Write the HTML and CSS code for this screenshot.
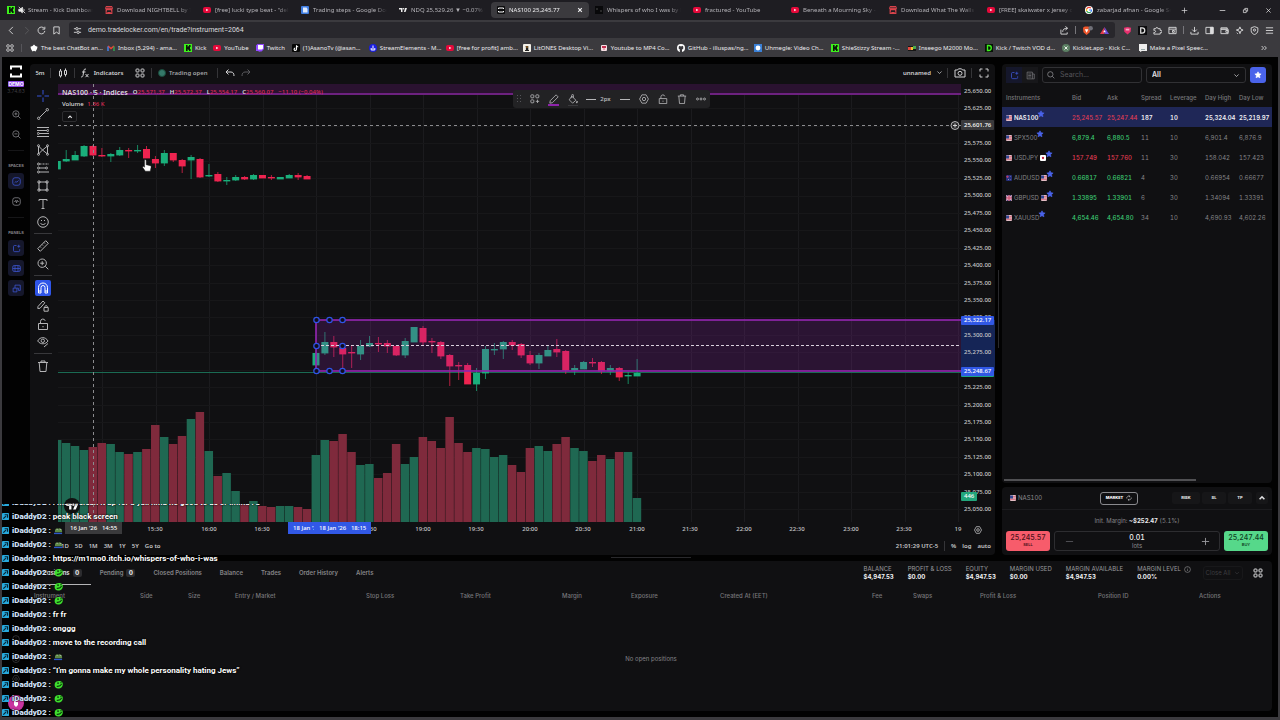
FILE: index.html
```html
<!DOCTYPE html>
<html lang="en">
<head>
    <meta charset="UTF-8">
    <meta name="viewport" content="width=device-width, initial-scale=1.0">
    <title>NAS100 25,245.77</title>
    <link rel="stylesheet" href="styles.css">
</head>
<body>
    <svg class="sprite" aria-hidden="true">
        <symbol id="i-kick" viewBox="0 0 8 8"><path fill="#3df01c" d="M0 0h8v8H0z"/><path fill="#0b1a08" d="M2 1h1.6v1.8h.7V2H5V1h1.6v2H6v1.9h.6V7H5V6h-.7v-.8h-.7V7H2z"/></symbol>
        <symbol id="i-yt" viewBox="0 0 8 8"><rect y="1" width="8" height="6" rx="2" fill="#e5093a"/><path fill="#fff" d="M3.2 2.7v2.6L5.4 4z"/></symbol>
        <symbol id="i-itch" viewBox="0 0 8 8"><path fill="#d8434b" d="M1 0h6l1 2.2-.6 1V8H.6V3.2L0 2.200z"/><path fill="#1d1c21" d="M2 4.200h4l.5 2.600L5 6H3l-1.500.8z"/><path fill="#1d1c21" d="M1 1.500h6v.6H1z"/></symbol>
        <symbol id="i-doc" viewBox="0 0 8 8"><rect width="8" height="8" rx="1" fill="#3f7de0"/><path fill="#dfeafc" d="M2 1.500h3.500L6.500 3v3.500H2z"/></symbol>
        <symbol id="i-tv" viewBox="0 0 8 8"><path fill="#eee" d="M0 2h3.500v4H2V3.500H0zM6 2h2L6.500 6H5z"/><circle cx="4.500" cy="2.800" r=".8" fill="#eee"/></symbol>
        <symbol id="i-tl" viewBox="0 0 8 8"><rect width="8" height="8" rx="1" fill="#0b0b0c"/><path fill="none" stroke="#fff" d="M1.500 3V2h5v1M1.500 5v1h5V5"/></symbol>
        <symbol id="i-dark" viewBox="0 0 8 8"><rect width="8" height="8" fill="#08080a"/><path stroke="#666" stroke-width=".7" d="M1 3h2M5 5h2"/></symbol>
        <symbol id="i-google" viewBox="0 0 8 8"><circle cx="4" cy="4" r="4" fill="#fff"/><g fill="none" stroke-width="1.200"><path stroke="#ea4335" d="M1.700 3a2.500 2.500 0 0 1 4.200-.8"/><path stroke="#fbbc05" d="M1.700 5a2.500 2.500 0 0 1 0-2"/><path stroke="#34a853" d="M5.800 5.800A2.500 2.500 0 0 1 1.700 5"/><path stroke="#4285f4" d="M4 4h2.500a2.500 2.500 0 0 1-.7 1.800"/></g></symbol>
        <symbol id="i-bot" viewBox="0 0 8 8"><path fill="#fff" d="M4 .5 5.500 2l2 .7L7 5 5.500 7.500 4 6.700 2.500 7.500 1 5 .5 2.700 2.500 2z"/></symbol>
        <symbol id="i-gmail" viewBox="0 0 8 8"><path fill="none" stroke="#ea4335" stroke-width="1.500" d="M1 2l3 2.500L7 2"/><path stroke="#4285f4" stroke-width="1.400" d="M1 2.500V7"/><path stroke="#34a853" stroke-width="1.400" d="M7 2.500V7"/></symbol>
        <symbol id="i-twitch" viewBox="0 0 8 8"><path fill="#9147ff" d="M1.500 0H8v5L5.500 7.500H4L2.700 8V7H0V1.500z"/><path fill="#fff" d="M2 1h5v3.500L6 5.500H2z"/></symbol>
        <symbol id="i-tiktok" viewBox="0 0 8 8"><rect width="8" height="8" rx="1" fill="#060606"/><path fill="none" stroke="#fff" stroke-width="1.100" d="M4.500 1.200v4a1.200 1.200 0 1 1-1.200-1.200M4.500 1.500c.2.900.8 1.400 1.700 1.400"/></symbol>
        <symbol id="i-se" viewBox="0 0 8 8"><circle cx="4" cy="4" r="4" fill="#1a1fe0"/><path fill="none" stroke="#fff" d="M4 1.500v4M2.200 4v2h3.600V4"/></symbol>
        <symbol id="i-lit" viewBox="0 0 8 8"><rect width="8" height="8" rx="1" fill="#f3efe6"/><path fill="#222" d="M2.500 2h2.800v4H6v1H2V6h.9V3.500z"/><circle cx="4" cy="3" r=".8" fill="#e08a1e"/></symbol>
        <symbol id="i-mp4" viewBox="0 0 8 8"><rect x="1" y="1" width="6" height="6" rx="1" fill="#f6dfe4"/><path fill="#c22f50" d="M2 2h4v2H2zM3.200 4.500h1.600L4 6.200z"/></symbol>
        <symbol id="i-gh" viewBox="0 0 8 8"><circle cx="4" cy="4" r="4" fill="#fff"/><path fill="#3a393d" d="M2 1.700l1 .5h2l1-.5.2 1.300c.5 1.500-.2 2.400-1.200 2.600V8H3V6.600l-1-.3 1-.2v-.5C2 5.400 1.300 4.500 1.800 3z"/></symbol>
        <symbol id="i-uhm" viewBox="0 0 8 8"><rect width="8" height="8" fill="#3a80d6"/><circle cx="4" cy="4" r="2.400" fill="#fff"/></symbol>
        <symbol id="i-ins" viewBox="0 0 8 8"><rect y="2" width="8" height="5" fill="#151515"/><path fill="#e2463c" d="M0 3h3v3H0z"/><path fill="#f1c232" d="M3 3h2v3H3z"/><path fill="#48a84c" d="M5 2h3v3H5z"/></symbol>
        <symbol id="i-vod" viewBox="0 0 8 8"><rect width="8" height="8" fill="#061206"/><path fill="none" stroke="#3df01c" stroke-width="1.400" d="M2.500 1.500h1.300a2.500 2.500 0 0 1 0 5H2.500z"/></symbol>
        <symbol id="i-klet" viewBox="0 0 8 8"><circle cx="4" cy="4" r="4" fill="#5b7f63"/><path stroke="#e9efe9" d="M2.500 2.500l3 3M5.500 2.500l-3 3"/></symbol>
        <symbol id="i-pix" viewBox="0 0 8 8"><path fill="#eee" d="M0 0h8v7H3L1 8V7H0z"/><path fill="#9aa" d="M2 5h4v1H2z"/></symbol>

        <symbol id="i-x" viewBox="0 0 10 10"><path d="M2 2l6 6M8 2l-6 6"/></symbol>
        <symbol id="i-plus" viewBox="0 0 10 10"><path d="M5 1v8M1 5h8"/></symbol>
        <symbol id="i-minus" viewBox="0 0 10 10"><path d="M1 5h8"/></symbol>
        <symbol id="i-down" viewBox="0 0 10 10"><path d="M2 3.500l3 3 3-3"/></symbol>
        <symbol id="i-up" viewBox="0 0 10 10"><path d="M2 6.500l3-3 3 3"/></symbol>
        <symbol id="i-restore" viewBox="0 0 10 10"><path d="M2 4h4v4H2zM4 4V2h4v4H6"/></symbol>
        <symbol id="i-back" viewBox="0 0 10 10"><path d="M6.500 1l-4 4 4 4"/></symbol>
        <symbol id="i-fwd" viewBox="0 0 10 10"><path d="M3.500 1l4 4-4 4"/></symbol>
        <symbol id="i-reload" viewBox="0 0 10 10"><path d="M8.700 5.500A3.800 3.800 0 1 1 8 2.700M8.700.8v2.700H6"/></symbol>
        <symbol id="i-bm" viewBox="0 0 10 10"><path d="M2 1h6v8L5 6.800 2 9z"/></symbol>
        <symbol id="i-tune" viewBox="0 0 10 10"><path d="M1 3h2M6 3h3M1 7h3M7 7h2"/><circle cx="4.300" cy="3" r="1.300"/><circle cx="5.700" cy="7" r="1.300"/></symbol>
        <symbol id="i-share" viewBox="0 0 10 10"><path d="M1 4v5h7V7M3 6.500c0-2.500 1.500-4 5-4M6 .5l2.500 2L6 4.500"/></symbol>
        <symbol id="i-puzzle" viewBox="0 0 10 10"><path d="M1 3h2a1.300 1.300 0 1 1 2.600 0H8v2a1.300 1.300 0 1 1 0 2.400V9H1V7a1.200 1.200 0 1 0 0-2z"/></symbol>
        <symbol id="i-win" viewBox="0 0 10 10"><path d="M1 1.500h8v7H1zM1 3.500h8M5 5h2v2H5z"/></symbol>
        <symbol id="i-dl" viewBox="0 0 10 10"><path d="M5 1v5.500M2.500 4L5 6.500 7.500 4M1 6.500V9h8V6.500"/></symbol>
        <symbol id="i-side" viewBox="0 0 10 10"><path d="M1 1.500h8v7H1z"/><path fill="currentColor" d="M6 1.500h3v7H6z"/></symbol>
        <symbol id="i-wallet" viewBox="0 0 10 10"><path d="M1 2h7v1.500H1zM1 3.500h8v5H1zM9 5H6.500v2H9z"/></symbol>
        <symbol id="i-leo" viewBox="0 0 10 10"><path d="M5.500 1l1 2.500L9 4.500 6.500 5.600l-1 2.900-1-2.900L1.500 4.500l3-1zM2 7.500l1.200 1.200"/></symbol>
        <symbol id="i-shield" viewBox="0 0 10 10"><path d="M5 .7L8.700 2v3.200C8.700 7.400 7 8.800 5 9.500 3 8.800 1.300 7.400 1.300 5.200V2z"/><circle cx="5" cy="4.500" r="1.200"/></symbol>
        <symbol id="i-menu" viewBox="0 0 10 10"><path d="M1 2h8M1 5h8M1 8h8"/></symbol>
        <symbol id="i-grid" viewBox="0 0 10 10"><rect x="1" y="1" width="3" height="3" rx=".8"/><rect x="6" y="1" width="3" height="3" rx=".8"/><rect x="1" y="6" width="3" height="3" rx=".8"/><rect x="6" y="6" width="3" height="3" rx=".8"/></symbol>
        <symbol id="i-more" viewBox="0 0 10 10"><path d="M2 2.500L4.500 5 2 7.500M5.500 2.500L8 5 5.500 7.500"/></symbol>
        <symbol id="i-mute" viewBox="0 0 10 10"><path fill="currentColor" d="M1 4h2l2.500-2.500v7L3 6.500H1z"/><path d="M1 1l8 8M7 3.500a2 2 0 0 1 0 3"/></symbol>

        <symbol id="i-candles" viewBox="0 0 10 10"><path d="M1.500 3h2v5h-2zM6.500 2.500h2v4h-2zM2.500 1v2M2.500 8v1.500M7.500.5v2M7.500 6.500v2"/></symbol>
        <symbol id="i-fx" viewBox="0 0 10 10"><path d="M6 1.200C4.500.6 4 1.500 3.800 3L3 7.500C2.800 8.800 2 9.200 1 8.800M2 4h3.500M5.500 6l3 3.200M8.500 6l-3 3.200"/></symbol>
        <symbol id="i-undo" viewBox="0 0 10 10"><path d="M3.500 1.500L1 4l2.500 2.500M1 4h5c2 0 3 1.500 3 4"/></symbol>
        <symbol id="i-redo" viewBox="0 0 10 10"><path d="M6.500 1.500L9 4 6.500 6.500M9 4H4C2 4 1 5.500 1 8"/></symbol>
        <symbol id="i-camera" viewBox="0 0 12 10"><path d="M1 2h2.500L4.500.8h3L8.500 2H11v7H1z"/><circle cx="6" cy="5.300" r="2"/></symbol>
        <symbol id="i-full" viewBox="0 0 10 10"><path d="M1 3.500V1h2.500M6.500 1H9v2.500M9 6.500V9H6.500M3.500 9H1V6.500"/></symbol>
        <symbol id="i-cross" viewBox="0 0 12 12"><path d="M6 0v4.500M6 7.500V12M0 6h4.500M7.500 6H12"/></symbol>
        <symbol id="i-line" viewBox="0 0 12 12"><path d="M2.500 9.500l7-7"/><circle cx="1.700" cy="10.300" r="1.200"/><circle cx="10.300" cy="1.700" r="1.200"/></symbol>
        <symbol id="i-fib" viewBox="0 0 12 12"><path d="M0 1.500h12M0 4.500h10M2 7.500h10M0 10.500h12"/><circle cx="10.700" cy="4.500" r="1"/><circle cx="1.300" cy="7.500" r="1"/></symbol>
        <symbol id="i-xabcd" viewBox="0 0 12 12"><path d="M1.500 10V2l4 4 5-4v8l-5-4-4 4"/><circle cx="1.500" cy="1.700" r="1"/><circle cx="10.500" cy="1.700" r="1"/><circle cx="1.500" cy="10.300" r="1"/><circle cx="10.500" cy="10.300" r="1"/></symbol>
        <symbol id="i-pos" viewBox="0 0 12 12"><path stroke-dasharray="2 1" d="M2.500 2H12"/><path d="M2.500 6h6M2.500 10H12"/><circle cx="1.500" cy="2" r="1"/><circle cx="1.500" cy="6" r="1"/><circle cx="1.500" cy="10" r="1"/><circle cx="9.500" cy="6" r="1"/></symbol>
        <symbol id="i-rect" viewBox="0 0 12 12"><path d="M2 2h8v8H2z"/><circle cx="2" cy="2" r="1.200"/><circle cx="10" cy="2" r="1.200"/><circle cx="2" cy="10" r="1.200"/><circle cx="10" cy="10" r="1.200"/></symbol>
        <symbol id="i-text" viewBox="0 0 12 12"><path d="M2 3V1.500h8V3M6 1.500v9M4.500 10.500h3"/></symbol>
        <symbol id="i-smile" viewBox="0 0 12 12"><circle cx="6" cy="6" r="5.300"/><path d="M3.500 7c.8 2 4.200 2 5 0M4.500 4v1M7.500 4v1"/></symbol>
        <symbol id="i-ruler" viewBox="0 0 12 12"><path d="M.7 8.700l8-8 2.600 2.600-8 8zM3 6.500l1 1M5 4.500l1 1M7 2.500l1 1"/></symbol>
        <symbol id="i-zin" viewBox="0 0 12 12"><circle cx="5.200" cy="5.200" r="4.200"/><path d="M8.300 8.300l3 3M3.200 5.200h4M5.200 3.200v4"/></symbol>
        <symbol id="i-zout" viewBox="0 0 12 12"><circle cx="5.200" cy="5.200" r="4.200"/><path d="M8.300 8.300l3 3M3.200 5.200h4"/></symbol>
        <symbol id="i-magnet" viewBox="0 0 12 12"><path d="M1.500 11V5.500a4.500 4.500 0 0 1 9 0V11H8V5.500a2 2 0 0 0-4 0V11zM1.500 9H4M8 9h2.500"/></symbol>
        <symbol id="i-penlock" viewBox="0 0 12 12"><path d="M.8 8.500L1 6.500l5-5.500 1.800 1.800L3 8.300zM7 7.500h4.200v3.700H7zM8 7.500V6.300a1.200 1.200 0 0 1 2.200 0v1.200"/></symbol>
        <symbol id="i-lock" viewBox="0 0 12 12"><path d="M1.500 5.500h9v6h-9zM3.500 5.500V3.300a2.400 2.400 0 0 1 4.700-.5M6 8v1.300"/></symbol>
        <symbol id="i-eye" viewBox="0 0 12 12"><path d="M.7 5C3 .5 8.500.5 11 5 8.800 8.500 3.500 9 .7 5z"/><circle cx="5.800" cy="4.800" r="1.700"/><path d="M7 11l4-3.500"/></symbol>
        <symbol id="i-trash" viewBox="0 0 12 12"><path d="M1 2.500h10M4 2.500V1h4v1.500M2.200 2.500l.8 9h6l.8-9"/></symbol>
        <symbol id="i-tpl" viewBox="0 0 12 12"><rect x="1" y="1" width="3.600" height="3.600" rx="1"/><rect x="7" y="1" width="3.600" height="3.600" rx="1"/><rect x="1" y="7" width="3.600" height="3.600" rx="1"/><path d="M9 6.800v4M7 8.800h4"/></symbol>
        <symbol id="i-pencil" viewBox="0 0 12 12"><path d="M1 11l.5-3L8.500 1 11 3.500 4 10.500z"/></symbol>
        <symbol id="i-bucket" viewBox="0 0 12 12"><path d="M4.500 2.500l5 5-4 3.500-4-4zM4.500 5V1.500a1 1 0 0 1 2 0v3"/><path fill="currentColor" d="M11 8.500v2h-1z"/></symbol>
        <symbol id="i-gear" viewBox="0 0 12 12"><path d="M3.500 1h5L11.300 6 8.500 11h-5L.7 6z"/><circle cx="6" cy="6" r="2"/></symbol>
        <symbol id="i-dots" viewBox="0 0 12 12"><circle cx="1.800" cy="6" r="1.200"/><circle cx="6" cy="6" r="1.200"/><circle cx="10.200" cy="6" r="1.200"/></symbol>
        <symbol id="i-drag" viewBox="0 0 6 8"><path stroke-dasharray="1 2" d="M1.500 0v8M4.500 0v8"/></symbol>
        <symbol id="i-chartbox" viewBox="0 0 12 12"><rect x="1" y="1" width="10" height="10" rx="3"/><path d="M3.500 7.500L5.300 6l1.200 1L8.700 4.500"/></symbol>
        <symbol id="i-codebox" viewBox="0 0 12 12"><rect x="1" y="1" width="10" height="10" rx="3"/><path d="M3 6h1.200L5 4.300 6 8l1-3.700L7.800 6H9"/></symbol>
        <symbol id="i-newbox" viewBox="0 0 12 12"><path d="M6 2H3.500A1.500 1.500 0 0 0 2 3.500v5.200a1.500 1.500 0 0 0 1.500 1.500h5.200a1.500 1.500 0 0 0 1.500-1.500V7M9 1v4M7 3h4"/></symbol>
        <symbol id="i-depth" viewBox="0 0 12 12"><rect x="1" y="2" width="10" height="8" rx="2"/><path d="M1 6h10M4 2v8M8 2v8"/></symbol>
        <symbol id="i-blocks" viewBox="0 0 12 12"><path d="M4 1.500h7v7H8.500M1.500 5.500h5v5h-5zM4 1.500v4M6.500 5.500h2v3"/></symbol>
        <symbol id="i-news" viewBox="0 0 12 12"><path d="M1.500 1.500h7v9h-7zM8.500 4H11v6.500H8.500M3 4h4M3 6h4M3 8h4"/></symbol>
        <symbol id="i-search" viewBox="0 0 12 12"><circle cx="5" cy="5" r="4"/><path d="M8 8l3 3"/></symbol>
        <symbol id="i-swap" viewBox="0 0 12 12"><path d="M1.500 7a4.500 4 0 0 1 6-4.500M6 .8l1.800 1.800L6 4.300M10.500 5a4.500 4 0 0 1-6 4.500M6 7.700L4.200 9.500 6 11.200"/></symbol>
        <symbol id="i-info" viewBox="0 0 12 12"><circle cx="6" cy="6" r="5"/><path d="M6 5.500v3M6 3v1"/></symbol>
        <symbol id="i-star" viewBox="0 0 12 12"><path fill="currentColor" stroke="currentColor" stroke-linejoin="round" d="M6 1.200l1.400 3 3.300.4-2.400 2.300.6 3.300L6 8.600l-2.900 1.600.6-3.300L1.300 4.600l3.300-.4z"/></symbol>

        <symbol id="f-us" viewBox="0 0 12 12"><rect width="12" height="12" rx="2" fill="#e9dfe3"/><path stroke="#c8394f" stroke-width="1.600" d="M0 2.500h12M0 6h12M0 9.500h12"/><path fill="#33468f" d="M0 1h6v6H0z"/></symbol>
        <symbol id="f-jp" viewBox="0 0 12 12"><rect width="12" height="12" rx="2" fill="#fff"/><circle cx="6" cy="6" r="2.300" fill="#c01f3b"/></symbol>
        <symbol id="f-au" viewBox="0 0 12 12"><rect width="12" height="12" rx="2" fill="#27307c"/><path stroke="#d8436a" stroke-width="1.300" d="M0 3.500h6M3 1v5"/><path fill="#dde" d="M8 3h1v1H8zM9 8h1v1H9zM4 8h1.500v1.500H4z"/></symbol>
        <symbol id="f-gb" viewBox="0 0 12 12"><rect width="12" height="12" rx="2" fill="#39417f"/><path stroke="#e9a9bb" stroke-width="2.500" d="M0 1l12 10M12 1L0 11M6 0v12M0 6h12"/><path stroke="#c22347" stroke-width="1.300" d="M6 0v12M0 6h12"/></symbol>
        <symbol id="c-badge" viewBox="0 0 8 8"><rect width="8" height="8" rx="1" fill="#27a9dc"/><path fill="none" stroke="#072434" stroke-width="1.400" d="M1.500 6.500l3-3M3 2h3.300v3.300"/></symbol>
        <symbol id="c-frog" viewBox="0 0 10 10"><path fill="#3fe02e" d="M1 3.500C2 .5 8 0 9.500 3c.8 3-.5 6.500-5 6.500C1.500 9.500 0 7 1 3.500z"/><path fill="none" stroke="#0c3a0a" stroke-width="1.200" d="M3 7c2.500.3 4.500-.5 5.500-2.500M3.500 3.500h2M7 3h1.500"/></symbol>
        <symbol id="c-pepe" viewBox="0 0 10 8"><path fill="#5e8a45" d="M1 5c0-4 3-4 4-3 1-1 4-.6 4 2.500V6H1z"/><path fill="#2c57c9" d="M0 6.500h9V8H0z"/><path fill="#dfe8d8" d="M3 2.500h2v1H3zM6.500 2.500h2v1h-2z"/><path fill="#24361c" d="M4 2.500h1v1H4zM7.500 2.500h1v1h-1z"/></symbol>
    </svg>

    <header class="browser">
        <div class="tabs">
            <a class="tab" href="#"><svg class="fav"><use href="#i-kick"/></svg><svg class="icon fav mute"><use href="#i-mute"/></svg><span>Stream - Kick Dashboard</span></a>
            <a class="tab" href="#"><svg class="fav"><use href="#i-itch"/></svg><span>Download NIGHTBELL by Tom</span></a>
            <a class="tab" href="#"><svg class="fav"><use href="#i-yt"/></svg><span>[free] lucki type beat - "delirium"</span></a>
            <a class="tab" href="#"><svg class="fav"><use href="#i-doc"/></svg><span>Trading steps - Google Docs</span></a>
            <a class="tab" href="#"><svg class="fav"><use href="#i-tv"/></svg><span>NDQ 25,529.26 ▼ −0.07% Un</span></a>
            <a class="tab active" href="#"><svg class="fav"><use href="#i-tl"/></svg><span>NAS100 25,245.77</span><svg class="icon close"><use href="#i-x"/></svg></a>
            <a class="tab" href="#"><svg class="fav"><use href="#i-dark"/></svg><span>Whispers of who I was by M1m</span></a>
            <a class="tab" href="#"><svg class="fav"><use href="#i-yt"/></svg><span>fractured - YouTube</span></a>
            <a class="tab" href="#"><svg class="fav"><use href="#i-yt"/></svg><span>Beneath a Mourning Sky - Yo</span></a>
            <a class="tab" href="#"><svg class="fav"><use href="#i-itch"/></svg><span>Download What The Walls Hid</span></a>
            <a class="tab" href="#"><svg class="fav"><use href="#i-yt"/></svg><span>[FREE] skaiwater x jersey club</span></a>
            <a class="tab" href="#"><svg class="fav"><use href="#i-google"/></svg><span>zabarjad afnan - Google Search</span></a>
            <button class="bare new-tab" aria-label="New tab"><svg class="icon"><use href="#i-plus"/></svg></button>
            <div class="window-buttons">
                <button class="bare" aria-label="Minimize"><svg class="icon"><use href="#i-minus"/></svg></button>
                <button class="bare" aria-label="Restore"><svg class="icon"><use href="#i-restore"/></svg></button>
                <button class="bare" aria-label="Close"><svg class="icon"><use href="#i-x"/></svg></button>
            </div>
        </div>
        <div class="navbar">
            <button class="bare" aria-label="Back"><svg class="icon"><use href="#i-back"/></svg></button>
            <button class="bare dim" aria-label="Forward"><svg class="icon"><use href="#i-fwd"/></svg></button>
            <button class="bare" aria-label="Reload"><svg class="icon"><use href="#i-reload"/></svg></button>
            <button class="bare" aria-label="Bookmark"><svg class="icon"><use href="#i-bm"/></svg></button>
            <div class="address">
                <svg class="icon"><use href="#i-tune"/></svg>
                <input type="text" aria-label="Address" value="demo.tradelocker.com/en/trade?instrument=2064">
                <svg class="icon"><use href="#i-share"/></svg>
                <i class="sep"></i>
                <svg class="brand" viewBox="0 0 12 10"><path fill="#f0562b" d="M1 2l2-1.500h4L9 2l-.5 5L5 10 1.500 7z"/><path fill="#fff" d="M3 3.500h4L5 7.500z"/><circle cx="9.500" cy="2.500" r="2.500" fill="#707078"/></svg>
                <svg class="brand" viewBox="0 0 12 10"><path fill="#e33b4b" d="M6 1L1 9h5z"/><path fill="#6a4bd8" d="M6 1l5 8H6z"/><path fill="#fff" d="M6 4.500L4.500 7h3z"/></svg>
            </div>
            <div class="extensions">
                <svg viewBox="0 0 10 10"><path fill="#e5306e" d="M1 2l4-1 4 1-.5 4.500L5 9.500 1.500 6.500z"/><path fill="#f7a9c3" d="M3 3h4v2H3z"/></svg>
                <svg viewBox="0 0 10 10"><path fill="#0c0c0e" d="M0 0h10v10H0z"/><path fill="none" stroke="#ddd" stroke-width="1.400" d="M3 2h1.500a3 3 0 0 1 0 6H3z"/></svg>
                <svg class="icon"><use href="#i-puzzle"/></svg>
                <svg class="icon"><use href="#i-win"/></svg>
                <i class="sep"></i>
                <svg class="icon"><use href="#i-dl"/></svg>
                <svg class="icon"><use href="#i-side"/></svg>
                <svg class="icon"><use href="#i-wallet"/></svg>
                <svg class="icon"><use href="#i-leo"/></svg>
                <svg class="icon"><use href="#i-shield"/></svg>
                <svg class="icon"><use href="#i-menu"/></svg>
            </div>
        </div>
        <nav class="bookmarks">
            <svg class="icon apps"><use href="#i-grid"/></svg>
            <i class="sep"></i>
            <a class="long" href="#"><svg><use href="#i-bot"/></svg>The best ChatBot an...</a>
            <a class="long" href="#"><svg><use href="#i-gmail"/></svg>Inbox (5,294) - ama...</a>
            <a href="#"><svg><use href="#i-kick"/></svg>Kick</a>
            <a href="#"><svg><use href="#i-yt"/></svg>YouTube</a>
            <a href="#"><svg><use href="#i-twitch"/></svg>Twitch</a>
            <a class="long" href="#"><svg><use href="#i-tiktok"/></svg>(1)AsanoTv (@asan...</a>
            <a class="long" href="#"><svg><use href="#i-se"/></svg>StreamElements - M...</a>
            <a class="long" href="#"><svg><use href="#i-yt"/></svg>[free for profit] amb...</a>
            <a class="long" href="#"><svg><use href="#i-lit"/></svg>LitONES Desktop Vi...</a>
            <a class="long" href="#"><svg><use href="#i-mp4"/></svg>Youtube to MP4 Co...</a>
            <a class="long" href="#"><svg><use href="#i-gh"/></svg>GitHub - illuspas/ng...</a>
            <a class="long" href="#"><svg><use href="#i-uhm"/></svg>Uhmegle: Video Ch...</a>
            <a class="long" href="#"><svg><use href="#i-kick"/></svg>ShieStizzy Stream -...</a>
            <a class="long" href="#"><svg><use href="#i-ins"/></svg>Inseego M2000 Mo...</a>
            <a class="long" href="#"><svg><use href="#i-vod"/></svg>Kick / Twitch VOD d...</a>
            <a class="long" href="#"><svg><use href="#i-klet"/></svg>Kicklet.app - Kick C...</a>
            <a class="long" href="#"><svg><use href="#i-pix"/></svg>Make a Pixel Speec...</a>
            <button class="bare overflow" aria-label="More bookmarks"><svg class="icon"><use href="#i-more"/></svg></button>
        </nav>
    </header>

    <div class="app">
        <aside class="rail">
            <svg class="logo" viewBox="0 0 12 12"><path fill="none" stroke="#fff" stroke-width="2" d="M1 4V1h10v3M1 8v3h10V8"/></svg>
            <span class="demo">DEMO</span>
            <span class="version">3.74.63</span>
            <button class="rail-btn first" aria-label="Zoom in"><svg class="icon"><use href="#i-zin"/></svg></button>
            <button class="rail-btn" aria-label="Zoom out"><svg class="icon"><use href="#i-zout"/></svg></button>
            <hr>
            <span class="rail-label">SPACES</span>
            <button class="rail-btn on" aria-label="Chart space"><svg class="icon"><use href="#i-chartbox"/></svg></button>
            <button class="rail-btn" aria-label="Code space"><svg class="icon"><use href="#i-codebox"/></svg></button>
            <hr>
            <span class="rail-label">PANELS</span>
            <button class="rail-btn on" aria-label="Instruments"><svg class="icon"><use href="#i-newbox"/></svg></button>
            <button class="rail-btn on" aria-label="Depth"><svg class="icon"><use href="#i-depth"/></svg></button>
            <button class="rail-btn on" aria-label="Layout"><svg class="icon"><use href="#i-blocks"/></svg></button>
            <div class="rail-foot">
                <svg class="icon"><use href="#i-info"/></svg>
                <svg class="icon"><use href="#i-smile"/></svg>
                <svg class="icon"><use href="#i-gear"/></svg>
                <svg class="avatar" viewBox="0 0 16 16"><circle cx="8" cy="8" r="8" fill="#c8359f"/><path fill="#fff" d="M6 4h2v3h2v3L8 12 6 10z"/></svg>
            </div>
        </aside>

        <main class="workspace">
            <section class="panel chart">
                <div class="chart-top">
                    <button class="bare w-tf">5m</button><i class="sep"></i>
                    <button class="bare w-icon" aria-label="Candles"><svg class="icon"><use href="#i-candles"/></svg></button><i class="sep"></i>
                    <button class="bare w-ind"><svg class="icon"><use href="#i-fx"/></svg>Indicators</button>
                    <button class="bare w-icon" aria-label="Layouts"><svg class="icon"><use href="#i-grid"/></svg></button><i class="sep"></i>
                    <span class="market-state"><b></b>Trading open</span><i class="sep"></i>
                    <button class="bare w-icon" aria-label="Undo"><svg class="icon"><use href="#i-undo"/></svg></button>
                    <button class="bare dim" aria-label="Redo"><svg class="icon"><use href="#i-redo"/></svg></button>
                    <button class="bare layout-name">unnamed<svg class="icon"><use href="#i-down"/></svg></button><i class="sep"></i>
                    <button class="bare w-icon" aria-label="Snapshot"><svg class="icon camera"><use href="#i-camera"/></svg></button><i class="sep"></i>
                    <button class="bare w-icon" aria-label="Fullscreen"><svg class="icon"><use href="#i-full"/></svg></button>
                </div>
                <div class="chart-body">
                    <div class="draw-tools">
                        <button class="cross" aria-label="Cursor"><svg class="icon"><use href="#i-cross"/></svg></button>
                        <button aria-label="Trend line"><svg class="icon"><use href="#i-line"/></svg></button>
                        <button aria-label="Fib retracement"><svg class="icon"><use href="#i-fib"/></svg></button>
                        <button aria-label="Patterns"><svg class="icon"><use href="#i-xabcd"/></svg></button>
                        <button aria-label="Positions"><svg class="icon"><use href="#i-pos"/></svg></button>
                        <button aria-label="Shapes"><svg class="icon"><use href="#i-rect"/></svg></button>
                        <button aria-label="Text"><svg class="icon"><use href="#i-text"/></svg></button>
                        <button aria-label="Emoji"><svg class="icon"><use href="#i-smile"/></svg></button>
                        <hr>
                        <button aria-label="Measure"><svg class="icon"><use href="#i-ruler"/></svg></button>
                        <button aria-label="Zoom"><svg class="icon"><use href="#i-zin"/></svg></button>
                        <hr>
                        <button class="on" aria-label="Magnet"><svg class="icon"><use href="#i-magnet"/></svg></button>
                        <button aria-label="Keep drawing"><svg class="icon"><use href="#i-penlock"/></svg></button>
                        <button aria-label="Lock"><svg class="icon"><use href="#i-lock"/></svg></button>
                        <button aria-label="Hide"><svg class="icon"><use href="#i-eye"/></svg></button>
                        <hr>
                        <button aria-label="Remove"><svg class="icon"><use href="#i-trash"/></svg></button>
                    </div>
                    <div class="plot">
                        <svg class="canvas" id="canvas"></svg>
                        <div class="legend">
                            <div class="legend-title"><strong>NAS100 · 5 · Indices</strong>
                                <span>O<em>25,571.37</em></span><span>H<em>25,572.37</em></span><span>L<em>25,554.17</em></span><span>C<em>25,560.07</em></span><em>−11.10 (−0.04%)</em></div>
                            <div class="legend-vol">Volume <em>1.36 K</em></div>
                            <button class="collapse" aria-label="Collapse legend"><svg class="icon"><use href="#i-up"/></svg></button>
                        </div>
                        <div class="shape-bar">
                            <svg class="icon drag"><use href="#i-drag"/></svg>
                            <button aria-label="Template"><svg class="icon"><use href="#i-tpl"/></svg></button>
                            <button class="purple" aria-label="Line colour"><svg class="icon"><use href="#i-pencil"/></svg></button>
                            <button class="fill" aria-label="Fill colour"><svg class="icon"><use href="#i-bucket"/></svg></button>
                            <button class="wide"><i></i>2px</button>
                            <button aria-label="Line style"><i></i></button>
                            <button aria-label="Settings"><svg class="icon"><use href="#i-gear"/></svg></button>
                            <button aria-label="Lock"><svg class="icon"><use href="#i-lock"/></svg></button>
                            <button aria-label="Delete"><svg class="icon"><use href="#i-trash"/></svg></button>
                            <button aria-label="More"><svg class="icon"><use href="#i-dots"/></svg></button>
                        </div>
                        <svg class="tv-mark" viewBox="0 0 14 14"><circle cx="7" cy="7" r="7" fill="#111"/><path fill="#fff" d="M2 5h4.500v5h-2V7H2zM10 5h2.500l-2.200 5H8z"/><circle cx="8.200" cy="6" r="1.100" fill="#fff"/></svg>
                        <svg class="pointer" viewBox="0 0 12 16"><path fill="#fff" stroke="#222" stroke-width=".6" d="M3 1c1-.5 2 0 2 1v5l5 1.200c1 .3 1.200 1 1 2L10 15H4L.8 10.500c-.4-1 .8-1.700 1.500-1L3 10z"/></svg>
                    </div>
                    <div class="price-axis">
                        <div class="range-band"></div>
                        <div class="prices" id="prices"></div>
                        <span class="tag t-cursor">25,601.76</span>
                        <span class="tag t-last"></span>
                        <span class="tag t-top">25,322.17</span>
                        <span class="tag t-bottom">25,248.67</span>
                        <span class="tag t-vol">446</span>
                    </div>
                    <div class="time-axis" id="times">
                        <span class="time-tag grey">16 Jan '26 &nbsp; 14:55</span>
                        <span class="time-tag from">18 Jan '26</span>
                        <span class="time-tag to">18 Jan '26 &nbsp; 18:15</span>
                    </div>
                    <button class="bare axis-gear" aria-label="Axis settings"><svg class="icon"><use href="#i-gear"/></svg></button>
                </div>
                <div class="chart-foot">
                    <button class="bare">1D</button><button class="bare">5D</button><button class="bare">1M</button><button class="bare">3M</button><button class="bare">1Y</button><button class="bare">5Y</button><button class="bare">Go to</button>
                    <span class="clock">21:01:29 UTC-5</span><i class="sep"></i>
                    <button class="bare">%</button><button class="bare">log</button><button class="bare">auto</button>
                </div>
            </section>

            <div class="side">
                <section class="panel instruments">
                    <div class="filters">
                        <button class="sq on" aria-label="Instruments"><svg class="icon"><use href="#i-newbox"/></svg></button>
                        <button class="sq" aria-label="News"><svg class="icon"><use href="#i-news"/></svg></button>
                        <label class="search"><svg class="icon"><use href="#i-search"/></svg><input type="text" placeholder="Search..." aria-label="Search instruments"></label>
                        <div class="select"><select aria-label="Category"><option>All</option></select><svg class="icon"><use href="#i-down"/></svg></div>
                        <button class="star-btn" aria-label="Favourites"><svg class="icon"><use href="#i-star"/></svg></button>
                    </div>
                    <table class="quotes">
                        <colgroup><col class="q-name"><col class="q-bid"><col class="q-ask"><col class="q-spread"><col class="q-lev"><col class="q-high"><col class="q-low"></colgroup>
                        <thead>
                            <tr><th>Instruments</th><th>Bid</th><th>Ask</th><th>Spread</th><th>Leverage</th><th>Day High</th><th>Day Low</th></tr>
                        </thead>
                        <tbody>
                            <tr class="selected"><td><svg class="flag"><use href="#f-us"/></svg>NAS100<svg class="fave"><use href="#i-star"/></svg></td><td class="down">25,245.57</td><td class="down">25,247.44</td><td>187</td><td>10</td><td>25,324.04</td><td>25,219.97</td></tr>
                            <tr><td><svg class="flag"><use href="#f-us"/></svg>SPX500<svg class="fave"><use href="#i-star"/></svg></td><td class="up">6,879.4</td><td class="up">6,880.5</td><td>11</td><td>10</td><td>6,901.4</td><td>6,876.9</td></tr>
                            <tr><td><svg class="flag"><use href="#f-us"/></svg>USDJPY<svg class="flag second"><use href="#f-jp"/></svg><svg class="fave"><use href="#i-star"/></svg></td><td class="down">157.749</td><td class="down">157.760</td><td>11</td><td>30</td><td>158.042</td><td>157.423</td></tr>
                            <tr><td><svg class="flag"><use href="#f-au"/></svg>AUDUSD<svg class="flag second"><use href="#f-us"/></svg><svg class="fave"><use href="#i-star"/></svg></td><td class="up">0.66817</td><td class="up">0.66821</td><td>4</td><td>30</td><td>0.66954</td><td>0.66677</td></tr>
                            <tr><td><svg class="flag"><use href="#f-gb"/></svg>GBPUSD<svg class="flag second"><use href="#f-us"/></svg><svg class="fave"><use href="#i-star"/></svg></td><td class="up">1.33895</td><td class="up">1.33901</td><td>6</td><td>30</td><td>1.34094</td><td>1.33391</td></tr>
                            <tr><td><svg class="flag"><use href="#f-us"/></svg>XAUUSD<svg class="fave"><use href="#i-star"/></svg></td><td class="up">4,654.46</td><td class="up">4,654.80</td><td>34</td><td>10</td><td>4,690.93</td><td>4,602.26</td></tr>
                        </tbody>
                    </table>
                    <div class="scrollbar"></div>
                </section>
                <section class="panel order">
                    <div class="order-head">
                        <span class="order-name"><svg class="flag"><use href="#f-us"/></svg>NAS100</span>
                        <button class="market">MARKET<svg class="icon"><use href="#i-swap"/></svg></button>
                        <div class="order-opts"><button class="chip risk">RISK</button><button class="chip">SL</button><button class="chip">TP</button><button class="chip tiny" aria-label="Collapse"><svg class="icon"><use href="#i-up"/></svg></button></div>
                    </div>
                    <p class="margin-line">Init. Margin: <b>~$252.47</b> (5.1%)</p>
                    <div class="order-row">
                        <button class="trade sell">25,245.57<small>SELL</small></button>
                        <div class="lots">
                            <button class="bare less" aria-label="Less"><svg class="icon"><use href="#i-minus"/></svg></button>
                            <div class="lots-field"><input id="lots" type="text" value="0.01"><label for="lots">lots</label></div>
                            <button class="bare" aria-label="More"><svg class="icon"><use href="#i-plus"/></svg></button>
                        </div>
                        <button class="trade buy">25,247.44<small>BUY</small></button>
                    </div>
                </section>
            </div>

            <section class="panel positions">
                <div class="pos-head">
                    <nav class="pos-tabs">
                        <a class="current" href="#">Positions<b>0</b></a><a href="#">Pending<b>0</b></a><a href="#">Closed Positions</a><a href="#">Balance</a><a href="#">Trades</a><a href="#">Order History</a><a href="#">Alerts</a>
                    </nav>
                    <dl class="stats">
                        <div><dt>BALANCE</dt><dd>$4,947.53</dd></div>
                        <div><dt>PROFIT &amp; LOSS</dt><dd>$0.00</dd></div>
                        <div><dt>EQUITY</dt><dd>$4,947.53</dd></div>
                        <div><dt>MARGIN USED</dt><dd>$0.00</dd></div>
                        <div><dt>MARGIN AVAILABLE</dt><dd>$4,947.53</dd></div>
                        <div><dt>MARGIN LEVEL <svg class="icon"><use href="#i-info"/></svg></dt><dd>0.00%</dd></div>
                    </dl>
                    <button class="close-all" disabled>Close All<svg class="icon"><use href="#i-down"/></svg></button>
                    <button class="bare pos-grid" aria-label="Columns"><svg class="icon"><use href="#i-grid"/></svg></button>
                </div>
                <table class="pos-table">
                    <colgroup><col class="p1"><col class="p2"><col class="p3"><col class="p4"><col class="p5"><col class="p6"><col class="p7"><col class="p8"><col class="p9"><col class="p10"><col class="p11"><col class="p12"><col class="p13"><col class="p14"></colgroup>
                    <thead>
                        <tr><th>Instrument</th><th>Side</th><th>Size</th><th>Entry / Market</th><th>Stop Loss</th><th>Take Profit</th><th>Margin</th><th>Exposure</th><th>Created At (EET)</th><th>Fee</th><th>Swaps</th><th>Profit &amp; Loss</th><th>Position ID</th><th>Actions</th></tr>
                    </thead>
                </table>
                <p class="empty">No open positions</p>
            </section>
        </main>
    </div>

    <!-- stream chat overlay -->
    <ul class="chat">
        <li><svg class="badge"><use href="#c-badge"/></svg><b>iDaddyD2</b> : i mean clean it up for a yall hmu no good to us or imma i a</li>
        <li><svg class="badge"><use href="#c-badge"/></svg><b>iDaddyD2</b> : peak black screen</li>
        <li><svg class="badge"><use href="#c-badge"/></svg><b>iDaddyD2</b> : <svg class="emote"><use href="#c-pepe"/></svg></li>
        <li><svg class="badge"><use href="#c-badge"/></svg><b>iDaddyD2</b> : <svg class="emote"><use href="#c-pepe"/></svg></li>
        <li><svg class="badge"><use href="#c-badge"/></svg><b>iDaddyD2</b> : https://m1mo0.itch.io/whispers-of-who-i-was</li>
        <li><svg class="badge"><use href="#c-badge"/></svg><b>iDaddyD2</b> : <svg class="emote"><use href="#c-frog"/></svg></li>
        <li><svg class="badge"><use href="#c-badge"/></svg><b>iDaddyD2</b> : <svg class="emote"><use href="#c-frog"/></svg></li>
        <li><svg class="badge"><use href="#c-badge"/></svg><b>iDaddyD2</b> : <svg class="emote"><use href="#c-frog"/></svg></li>
        <li><svg class="badge"><use href="#c-badge"/></svg><b>iDaddyD2</b> : fr fr</li>
        <li><svg class="badge"><use href="#c-badge"/></svg><b>iDaddyD2</b> : onggg</li>
        <li><svg class="badge"><use href="#c-badge"/></svg><b>iDaddyD2</b> : move to the recording call</li>
        <li><svg class="badge"><use href="#c-badge"/></svg><b>iDaddyD2</b> : <svg class="emote"><use href="#c-pepe"/></svg></li>
        <li><svg class="badge"><use href="#c-badge"/></svg><b>iDaddyD2</b> : “I'm gonna make my whole personality hating Jews”</li>
        <li><svg class="badge"><use href="#c-badge"/></svg><b>iDaddyD2</b> : <svg class="emote"><use href="#c-frog"/></svg></li>
        <li><svg class="badge"><use href="#c-badge"/></svg><b>iDaddyD2</b> : <svg class="emote"><use href="#c-frog"/></svg></li>
        <li><svg class="badge"><use href="#c-badge"/></svg><b>iDaddyD2</b> : <svg class="emote"><use href="#c-frog"/></svg></li>
    </ul>

    <script src="script.js"></script>
</body>
</html>
```

FILE: styles.css
```css
* {
    box-sizing: border-box;
}
body {
    margin: 0;
    height: 100vh;
    display: flex;
    flex-direction: column;
    background-color: #3b3a3e;
    color: #dcdcde;
    font-family: "Noto Sans", "Open Sans", sans-serif;
    font-size: 6px;
    line-height: 8px;
    overflow: hidden;
}
button, input, select {
    font: inherit;
    color: inherit;
    background: none;
    border: 0;
    padding: 0;
    margin: 0;
    outline: 0;
}
button {
    display: flex;
    align-items: center;
    justify-content: center;
}
a {
    color: inherit;
    text-decoration: none;
}
svg {
    display: block;
    flex: none;
    width: 10px;
    height: 10px;
}
hr {
    border: 0;
    margin: 0;
}
em {
    font-style: normal;
}
.sprite {
    position: absolute;
    width: 0;
    height: 0;
}
.icon {
    fill: none;
    stroke: currentColor;
    stroke-width: 1;
}
.sep {
    flex: none;
    width: 1px;
    height: 10px;
    background-color: #353538;
}
.dim {
    color: #5b5b5f;
}

/* browser frame */
.tabs {
    display: flex;
    align-items: center;
    height: 20px;
    padding-left: 1px;
    background-color: #1e1d22;
}
.tab {
    display: flex;
    align-items: center;
    gap: 4px;
    width: 98px;
    height: 16px;
    padding: 0 6px;
    color: #b4b3b8;
    white-space: nowrap;
    overflow: hidden;
}
.tab span {
    flex: 1;
    overflow: hidden;
    -webkit-mask-image: linear-gradient(to right, #000 85%, transparent);
    mask-image: linear-gradient(to right, #000 85%, transparent);
}
.tab.active {
    background-color: #3b3a3e;
    border-radius: 4px;
    color: #ececee;
}
.fav {
    width: 8px;
    height: 8px;
}
.mute {
    margin: 0 -2px 0 -1px;
    color: #eee;
}
.close {
    width: 6px;
    height: 6px;
    stroke-width: 2;
}
.new-tab {
    width: 14px;
}
.new-tab svg, .window-buttons svg {
    width: 7px;
    height: 7px;
}
.window-buttons {
    display: flex;
    margin-left: auto;
    color: #eee;
}
.window-buttons button {
    width: 23px;
}
.navbar {
    display: flex;
    align-items: center;
    gap: 5px;
    height: 20px;
    padding: 0 6px;
}
.navbar svg {
    width: 9px;
    height: 9px;
}
.navbar > button {
    width: 10px;
}
.address {
    flex: 1;
    display: flex;
    align-items: center;
    gap: 6px;
    height: 16px;
    margin-left: 3px;
    padding: 0 5px 0 4px;
    border-radius: 3px;
    background-color: #28272c;
}
.address input {
    flex: 1;
    font-family: Roboto, sans-serif;
    font-size: 7px;
}
.address .brand {
    width: 11px;
}
.address .sep, .navbar .sep {
    background-color: #77767b;
    height: 8px;
}
.extensions {
    display: flex;
    align-items: center;
    gap: 6px;
    padding-left: 3px;
}
.bookmarks {
    display: flex;
    align-items: center;
    height: 17px;
    padding: 0 12px 2px 6px;
    color: #ececee;
}
.bookmarks svg {
    width: 8px;
    height: 8px;
}
.bookmarks .sep {
    margin: 0 8px 0 7px;
    height: 8px;
    background-color: #56555a;
}
.bookmarks a {
    display: flex;
    align-items: center;
    gap: 3px;
    padding-right: 7px;
    white-space: nowrap;
}
.bookmarks .long {
    width: 77px;
}
.overflow {
    margin-left: auto;
}

/* app shell */
.app {
    flex: 1;
    min-height: 0;
    display: flex;
    margin: 0 2px 3px;
    padding: 7px 6px 6px 0;
    background-color: #020202;
}
.rail {
    display: flex;
    flex-direction: column;
    align-items: center;
    width: 28px;
    padding-top: 1px;
    color: #8b8b90;
}
.logo {
    width: 12px;
    height: 13px;
}
.demo {
    width: 16px;
    margin-top: 3px;
    border-radius: 1px;
    background-color: #8a45e6;
    color: #fff;
    font: 700 5px/6px Inter, sans-serif;
    text-align: center;
}
.version, .rail-label {
    font: 5px/8px Inter, sans-serif;
    color: #3c3c40;
}
.rail-label {
    height: 18px;
    padding-top: 7px;
    line-height: 8px;
    color: #8b8b90;
    font-weight: 600;
    font-size: 4px;
}
.rail-btn {
    width: 16px;
    height: 16px;
    margin-bottom: 4px;
    border-radius: 3px;
}
.rail-btn.first {
    margin-top: 11px;
}
.rail-btn.on {
    background-color: #15172b;
    color: #3f58d8;
}
.rail-btn .icon {
    width: 9px;
    height: 9px;
}
.rail hr {
    width: 16px;
    height: 1px;
    margin: 4px 0;
    background-color: #161618;
}
.rail-foot {
    display: flex;
    flex-direction: column;
    align-items: center;
    gap: 12px;
    margin-top: auto;
    color: #444448;
}
.rail-foot .icon {
    width: 8px;
    height: 8px;
}
.avatar {
    width: 16px;
    height: 16px;
}
.workspace {
    flex: 1;
    min-width: 0;
    display: grid;
    grid-template-columns: minmax(0, 1fr) 270px;
    grid-template-rows: minmax(0, 1fr) 150px;
    gap: 6px 7px;
}
.panel {
    border-radius: 4px;
    background-color: #101012;
}

/* chart */
.chart {
    display: flex;
    flex-direction: column;
    min-width: 0;
    overflow: hidden;
}
.chart-top {
    display: flex;
    align-items: center;
    height: 20px;
    padding-bottom: 3px;
    font-weight: 600;
    color: #d2d2d4;
}
.w-tf {
    width: 20px;
}
.w-icon {
    width: 23px;
}
.w-ind {
    width: 53px;
    gap: 4px;
}
.camera {
    width: 12px;
}
.market-state {
    display: flex;
    align-items: center;
    gap: 3px;
    width: 65px;
    padding-left: 6px;
    color: #a2a2a5;
}
.market-state b {
    width: 8px;
    height: 8px;
    border: 1px solid #1b4b3c;
    border-radius: 50%;
    background-color: #35796a;
}
.layout-name {
    gap: 5px;
    margin-left: auto;
    padding-right: 4px;
}
.layout-name .icon {
    width: 7px;
    height: 7px;
}
.chart-body {
    flex: 1;
    min-height: 0;
    display: grid;
    grid-template-columns: 28px minmax(0, 1fr) 34px;
    grid-template-rows: minmax(0, 1fr) 15px;
}
.draw-tools {
    grid-row: 1 / 3;
    display: flex;
    flex-direction: column;
    align-items: center;
    gap: 2px;
    width: 26px;
    padding-top: 4px;
    color: #b4b4b6;
}
.draw-tools button {
    width: 16px;
    height: 16px;
    border-radius: 2px;
}
.draw-tools .icon {
    width: 12px;
    height: 12px;
}
.draw-tools .cross {
    color: #3552d6;
}
.draw-tools .on {
    background-color: #2f55e8;
    color: #fff;
}
.draw-tools hr {
    width: 18px;
    height: 1px;
    margin: 1px 0 2px;
    background-color: #38383b;
}
.plot {
    position: relative;
    overflow: hidden;
}
.canvas {
    position: absolute;
    inset: 0;
    width: 100%;
    height: 100%;
}
.legend {
    position: relative;
    padding: 4px;
}
.legend em {
    font-weight: 500;
    color: #dc2a55;
}
.legend-title {
    display: flex;
    gap: 5px;
    line-height: 9px;
}
.legend-title strong {
    font-size: 7px;
    font-weight: 600;
}
.legend-title span {
    font-weight: 600;
}
.legend-vol {
    margin-top: 3px;
    font-weight: 500;
}
.legend-vol em {
    margin-left: 2px;
}
.collapse {
    width: 15px;
    height: 11px;
    margin-top: 3px;
    border: 1px solid #2d2d30;
    border-radius: 2px;
}
.collapse .icon {
    width: 6px;
    height: 6px;
    stroke-width: 2;
}
.shape-bar {
    position: absolute;
    top: 6px;
    left: 455px;
    display: flex;
    align-items: center;
    height: 18px;
    border-radius: 3px;
    background-color: #222224;
    color: #b6b6b8;
    font-weight: 600;
}
.shape-bar button {
    width: 19px;
    height: 14px;
    gap: 4px;
}
.shape-bar .wide {
    width: 33px;
}
.shape-bar i {
    width: 10px;
    height: 1px;
    background-color: #b6b6b8;
}
.shape-bar .icon {
    width: 10px;
    height: 10px;
}
.shape-bar .drag {
    width: 6px;
    height: 8px;
    margin: 0 3px;
    color: #55555a;
}
.shape-bar .purple {
    background: linear-gradient(#8e24aa, #8e24aa) center bottom / 11px 2px no-repeat;
}
.shape-bar .fill {
    background: linear-gradient(#3a3a3d, #3a3a3d) center bottom / 10px 1px no-repeat;
}
.tv-mark {
    position: absolute;
    left: 6px;
    bottom: 8px;
    width: 16px;
    height: 16px;
}
.pointer {
    position: absolute;
    left: 84px;
    top: 75px;
    width: 10px;
    height: 13px;
}
.price-axis {
    position: relative;
    color: #c6c6c8;
    font-weight: 500;
}
.prices {
    position: relative;
    display: flex;
    flex-direction: column;
    height: calc(100% + 2px);
    margin-top: -2px;
    padding-bottom: 4px;
}
.prices span {
    flex: 1;
    display: flex;
    align-items: center;
    padding-left: 3px;
}
.tag {
    position: absolute;
    left: 0;
    width: 33px;
    height: 9px;
    padding-left: 3px;
    border-radius: 1px;
    color: #fff;
    font-weight: 500;
    line-height: 9px;
}
.t-cursor {
    top: 36px;
    height: 10px;
    line-height: 10px;
    background-color: #3a3a3c;
}
.range-band {
    position: absolute;
    top: 236px;
    left: 0;
    right: 0;
    height: 51px;
    background-color: rgba(30, 70, 190, .4);
}
.t-top {
    top: 232px;
    background-color: #3158e6;
}
.t-bottom {
    top: 283px;
    background-color: #3158e6;
}
.t-last {
    top: 284px;
    background-color: #1aa384;
}
.t-vol {
    top: 408px;
    width: 16px;
    background-color: #22a67c;
}
.time-axis {
    position: relative;
    color: #c6c6c8;
    font-weight: 500;
}
.time-axis .tick {
    position: absolute;
    top: 3px;
    width: 30px;
    margin-left: -15px;
    text-align: center;
}
.time-tag {
    position: absolute;
    z-index: 1;
    top: 0;
    height: 12px;
    padding: 0 5px;
    color: #fff;
    font-weight: 500;
    line-height: 13px;
    white-space: nowrap;
}
.grey {
    left: 7px;
    background-color: #3a3a3c;
}
.from {
    left: 230px;
    background-color: #3158e6;
}
.to {
    left: 256px;
    background-color: #3158e6;
}
.axis-gear .icon {
    width: 8px;
    height: 8px;
}
.chart-foot {
    display: flex;
    align-items: center;
    gap: 6px;
    height: 18px;
    padding: 0 4px 0 31px;
    font-weight: 600;
    color: #c6c6c8;
}
.clock {
    margin-left: auto;
}

/* instruments panel */
.side {
    display: flex;
    flex-direction: column;
    gap: 4px;
    position: relative;
    font-family: Inter, "Noto Sans", sans-serif;
    font-variant-numeric: tabular-nums;
}
.side::before {
    content: "";
    position: absolute;
    left: -4px;
    top: 206px;
    width: 1px;
    height: 78px;
    background-color: #29292c;
}
.instruments {
    flex: 1;
    display: flex;
    flex-direction: column;
    overflow: hidden;
}
.filters {
    display: flex;
    align-items: center;
    gap: 4px;
    padding: 3px 6px 4px 4px;
}
.sq {
    width: 16px;
    height: 16px;
    margin-right: -4px;
    background-color: #17171a;
    color: #77777b;
}
.sq.on {
    background-color: #15172b;
    color: #3f58d8;
}
.sq .icon {
    width: 9px;
    height: 9px;
}
.search {
    display: flex;
    align-items: center;
    gap: 5px;
    flex: 1;
    height: 16px;
    margin-left: 4px;
    padding: 0 4px;
    border: 1px solid #313134;
    border-radius: 3px;
    font-size: 7px;
}
.search input {
    min-width: 0;
    width: 100%;
}
.search input::placeholder {
    color: #55555a;
}
.search .icon {
    width: 8px;
    height: 8px;
    color: #a0a0a4;
}
.select {
    position: relative;
    width: 100px;
    height: 16px;
    border: 1px solid #313134;
    border-radius: 3px;
}
.select select {
    width: 100%;
    height: 14px;
    padding: 0 5px;
    appearance: none;
    color: #e4e4e6;
    font-size: 7px;
    font-weight: 600;
}
.select .icon {
    position: absolute;
    right: 5px;
    top: 4px;
    width: 7px;
    height: 7px;
    pointer-events: none;
}
.star-btn {
    width: 16px;
    height: 16px;
    border-radius: 3px;
    background-color: #4a63ea;
    color: #fff;
}
.star-btn .icon {
    width: 8px;
    height: 8px;
}
.quotes, .pos-table {
    width: 100%;
    table-layout: fixed;
    border-collapse: collapse;
}
.quotes {
    color: #858588;
}
.quotes th, .pos-table th {
    height: 20px;
    padding: 1px 0 0;
    color: #77777a;
    font-weight: 500;
    text-align: left;
    white-space: nowrap;
}
.quotes td {
    height: 20px;
    padding: 1px 0 0;
    white-space: nowrap;
}
.quotes th:first-child, .quotes td:first-child {
    padding-left: 4px;
}
.quotes td:first-child {
    padding-bottom: 3px;
}
.quotes svg {
    display: inline-block;
    vertical-align: -1px;
}
.quotes .up {
    color: #3ccb72;
    font-weight: 500;
}
.quotes .down {
    color: #e23d54;
    font-weight: 500;
}
.quotes .selected {
    background-color: #1f2757;
    color: #f0f0f4;
    font-weight: 600;
}
.q-name { width: 70px; }
.q-bid { width: 35px; }
.q-ask { width: 34px; }
.q-spread { width: 29px; }
.q-lev { width: 35px; }
.q-high { width: 34px; }
.q-low { width: 33px; }
.flag {
    width: 6px;
    height: 6px;
    margin-right: 2px;
}
.flag.second {
    margin: 0 0 0 2px;
}
.quotes .fave {
    width: 8px;
    height: 8px;
    margin-left: -1px;
    vertical-align: 2px;
    color: #4a63ea;
}
.scrollbar {
    width: 192px;
    height: 2px;
    margin: auto 0 2px 2px;
    background-color: #505053;
}

/* order ticket */
.order {
    height: 68px;
}
.order-head {
    display: flex;
    align-items: center;
    height: 23px;
    padding: 0 4px 0 8px;
    border-bottom: 1px solid #1c1c1f;
}
.order-name {
    flex: 1;
    display: flex;
    align-items: center;
    color: #8d8d90;
}
.market {
    width: 38px;
    height: 13px;
    gap: 3px;
    border: 1px solid #8a8a8e;
    border-radius: 3px;
    color: #fff;
    font-size: 4px;
    font-weight: 800;
}
.market .icon {
    width: 6px;
    height: 6px;
}
.order-opts {
    display: flex;
    gap: 2px;
    margin-left: 34px;
}
.chip {
    width: 24px;
    height: 12px;
    border-radius: 2px;
    background-color: #161618;
    color: #e0e0e2;
    font-size: 4px;
    font-weight: 800;
}
.chip.risk {
    width: 28px;
}
.chip.tiny {
    width: 12px;
    margin-left: 2px;
}
.chip .icon {
    width: 8px;
    height: 8px;
    stroke-width: 2;
}
.margin-line {
    margin: 7px 0 6px;
    color: #858588;
    text-align: center;
}
.margin-line b {
    color: #e8e8ea;
}
.order-row {
    display: flex;
    gap: 4px;
    padding: 0 4px;
}
.trade {
    flex-direction: column;
    width: 44px;
    height: 20px;
    border-radius: 3px;
    font-size: 7px;
    font-weight: 500;
}
.trade small {
    font-size: 4px;
    font-weight: 600;
    line-height: 6px;
}
.sell {
    background-color: #f75c6b;
    color: #4c1119;
}
.buy {
    background-color: #56d88a;
    color: #0f4023;
}
.lots {
    flex: 1;
    display: flex;
    align-items: center;
    border: 1px solid #2d2d30;
    border-radius: 3px;
}
.lots .bare {
    width: 28px;
    color: #9a9a9e;
}
.lots .less {
    color: #55555a;
}
.lots .icon {
    width: 9px;
    height: 9px;
}
.lots-field {
    flex: 1;
    display: flex;
    flex-direction: column;
    align-items: center;
}
.lots-field input {
    width: 100%;
    color: #f2f2f4;
    font-size: 7px;
    font-weight: 500;
    line-height: 9px;
    text-align: center;
}
.lots-field label {
    color: #8d8d90;
}

/* positions panel */
.positions {
    position: relative;
    grid-column: 1 / 3;
    font-family: Inter, "Noto Sans", sans-serif;
}
.positions::before {
    content: "";
    position: absolute;
    top: -4px;
    left: 50%;
    width: 80px;
    height: 1px;
    margin-left: -40px;
    background-color: #29292c;
}
.pos-head {
    display: flex;
    align-items: center;
    height: 24px;
    padding-right: 9px;
}
.pos-tabs {
    display: flex;
    padding-left: 4px;
    color: #858588;
    font-weight: 600;
}
.pos-tabs a {
    display: flex;
    align-items: center;
    height: 24px;
    padding: 0 9px;
    border-bottom: 1px solid transparent;
}
.pos-tabs .current {
    border-color: #b5b5b7;
    color: #e4e4e6;
}
.pos-tabs b {
    width: 9px;
    margin-left: 3px;
    border-radius: 2px;
    background-color: #2c2c2f;
    color: #d0d0d2;
    text-align: center;
}
.stats {
    display: flex;
    gap: 14px;
    margin: 0 12px 0 auto;
}
.stats dt {
    display: flex;
    align-items: center;
    gap: 3px;
    color: #9a9a9d;
}
.stats dd {
    margin: 0;
    color: #f0f0f2;
    font-weight: 700;
}
.stats .icon {
    width: 7px;
    height: 7px;
}
.close-all {
    width: 40px;
    height: 14px;
    gap: 4px;
    border: 1px solid #18181a;
    border-radius: 3px;
    color: #3e3e41;
}
.close-all .icon {
    width: 6px;
    height: 6px;
}
.pos-grid {
    margin-left: 10px;
    color: #e4e4e6;
}
.pos-table th:first-child {
    padding-left: 4px;
}
.p1 { width: 110px; }
.p2 { width: 48px; }
.p3 { width: 47px; }
.p4 { width: 131px; }
.p5 { width: 94px; }
.p6 { width: 102px; }
.p7 { width: 69px; }
.p8 { width: 89px; }
.p9 { width: 152px; }
.p10 { width: 41px; }
.p11 { width: 67px; }
.p12 { width: 118px; }
.p13 { width: 101px; }
.p14 { width: 73px; }
.empty {
    margin: 50px 0 0;
    color: #858588;
    text-align: center;
}

/* chat overlay */
.chat {
    position: absolute;
    left: 2px;
    bottom: 0;
    display: flex;
    flex-direction: column;
    justify-content: flex-end;
    height: 216px;
    margin: 0;
    padding: 0;
    overflow: hidden;
    list-style: none;
    color: #fff;
    font: 700 8px/14px Roboto, sans-serif;
    text-shadow: 0 0 2px #000, 0 0 1px #000;
}
.chat li {
    flex: none;
    height: 14px;
    white-space: nowrap;
}
.chat b {
    color: #cfe0f7;
}
.chat svg {
    display: inline-block;
    vertical-align: middle;
}
.badge {
    width: 7px;
    height: 7px;
    margin-right: 3px;
}
.chat .emote {
    width: 9px;
    height: 9px;
    margin-left: 1px;
}
```

FILE: script.js
```js
// top, body top, body bottom, bottom, volume, direction
const bars = [
    [76, 77, 85, 85, 82, 'g'], [66, 75, 77, 78, 79, 'g'], [67, 71, 76, 76, 76, 'g'], [61, 62, 72, 73, 72, 'g'],
    [61, 62, 71, 72, 75, 'r'], [64, 71, 72, 73, 79, 'r'], [69, 70, 72, 78, 78, 'g'], [63, 66, 71, 72, 70, 'g'],
    [64, 66, 67, 74, 68, 'r'], [61, 66, 67, 69, 70, 'g'], [62, 65, 74, 74, 73, 'r'], [72, 75, 79, 84, 97, 'r'],
    [66, 69, 79, 82, 85, 'g'], [69, 69, 76, 78, 78, 'r'], [75, 76, 82, 89, 86, 'r'], [71, 73, 76, 95, 103, 'g'],
    [74, 75, 93, 94, 110, 'r'], [80, 91, 92, 93, 71, 'g'], [88, 90, 97, 98, 46, 'r'], [93, 96, 97, 101, 49, 'g'],
    [91, 93, 96, 97, 31, 'g'], [92, 93, 95, 96, 18, 'r'], [90, 91, 95, 96, 21, 'g'], [91, 91, 94, 94, 16, 'r'],
    [91, 93, 94, 96, 15, 'r'], [93, 93, 95, 95, 16, 'g'], [90, 91, 94, 94, 16, 'g'], [89, 91, 93, 96, 15, 'r'],
    [91, 92, 95, 95, 13, 'r'], [268, 269, 281, 281, 67, 'g'], [248, 258, 269, 271, 82, 'g'], [252, 258, 263, 273, 81, 'r'],
    [262, 264, 270, 284, 88, 'r'], [262, 268, 269, 284, 70, 'r'], [256, 262, 270, 276, 57, 'g'], [252, 259, 262, 263, 58, 'g'],
    [253, 259, 260, 268, 44, 'r'], [256, 259, 262, 269, 49, 'r'], [261, 262, 271, 272, 78, 'r'], [254, 257, 271, 274, 58, 'g'],
    [243, 243, 258, 258, 65, 'g'], [242, 244, 258, 261, 85, 'r'], [254, 257, 258, 269, 81, 'r'], [257, 258, 272, 275, 74, 'r'],
    [270, 271, 282, 302, 105, 'r'], [278, 281, 282, 296, 79, 'r'], [279, 281, 300, 300, 70, 'r'], [284, 289, 300, 307, 74, 'g'],
    [262, 265, 289, 295, 73, 'g'], [259, 265, 266, 271, 65, 'g'], [257, 258, 265, 275, 67, 'g'], [256, 258, 261, 266, 57, 'r'],
    [259, 260, 271, 274, 50, 'r'], [267, 271, 279, 281, 74, 'r'], [269, 271, 279, 285, 76, 'g'], [262, 266, 272, 272, 71, 'g'],
    [255, 265, 268, 273, 78, 'r'], [266, 267, 286, 290, 85, 'r'], [281, 284, 286, 291, 74, 'g'], [277, 278, 285, 285, 71, 'g'],
    [274, 278, 279, 283, 61, 'r'], [277, 278, 287, 290, 67, 'r'], [281, 284, 287, 291, 63, 'g'], [283, 284, 293, 297, 70, 'r'],
    [288, 291, 292, 300, 70, 'g'], [275, 289, 292, 292, 24, 'g']
];

const step = 8.92;
const first = -0.7;
const base = 438;
const barColor = { g: '#1aaf7b', r: '#ee2450' };
const volColor = { g: '#1f6852', r: '#7f2a3c' };

function drawChart() {
    let svg = '';

    for (let i = 0; i < 18; i++) {
        const x = Math.round(44 + i * 53.5);
        svg += `<path stroke="#1b1b1e" d="M${x}.5 0V${base}"/>`;
    }
    for (let i = 0; i < 25; i++) {
        const y = Math.round(7 + i * 17.42);
        svg += `<path stroke="#171719" d="M0 ${y}.5H2000"/>`;
    }

    svg += '<rect width="100%" height="10" fill="#2a1230"/><rect y="9" width="100%" height="2" fill="#6d2180"/>';
    svg += '<rect y="288" width="100%" height="1" fill="#1a6b53"/>';

    bars.forEach((bar, i) => {
        const [top, open, close, bottom, volume, dir] = bar;
        const x = first + i * step;
        svg += `<rect x="${x - 4.4}" y="${base - volume}" width="8.5" height="${volume}" fill="${volColor[dir]}"/>`;
        svg += `<rect x="${x - 0.5}" y="${top}" width="1" height="${bottom - top}" fill="${barColor[dir]}" opacity=".75"/>`;
        svg += `<rect x="${x - 3.5}" y="${open}" width="7" height="${close - open + 0.4}" fill="${barColor[dir]}"/>`;
    });

    // selected rectangle with its handles
    svg += '<rect x="258" y="236" width="100%" height="51" fill="#8e24aa" fill-opacity=".22"/>';
    svg += '<path fill="none" stroke="#8e24aa" stroke-width="2" d="M258 287V236M257 236H2000M257 287H2000" opacity=".85"/>';
    svg += '<path stroke="#d9cfdc" stroke-dasharray="3 2" d="M258 261.500H2000"/>';
    [[258, 236], [271, 236], [284, 236], [258, 262], [284, 262], [258, 287], [271, 287], [284, 287]].forEach(([x, y]) => {
        svg += `<circle cx="${x}.5" cy="${y}" r="2.700" fill="#120d1c" stroke="#2f55e8" stroke-width="1.200"/>`;
    });

    // crosshair
    svg += `<path stroke="#8b8b8e" stroke-dasharray="3 3" d="M35.500 0V${base}M0 41.500H2000"/>`;
    svg += '<svg x="100%" overflow="visible"><circle cx="-6" cy="41.500" r="4" fill="#2a2a2c" stroke="#b5b5b7"/><path stroke="#d0d0d2" d="M-8 41.500h4M-6 39.500v4"/></svg>';

    document.getElementById('canvas').innerHTML = svg;
}

function fillAxes() {
    const prices = document.getElementById('prices');
    for (let p = 25650; p >= 25050; p -= 25) {
        const label = document.createElement('span');
        label.textContent = p.toLocaleString('en-US', { minimumFractionDigits: 2 });
        // the cursor and last price tags take these two places
        if (p === 25600 || p === 25250) {
            label.textContent = '';
        }
        prices.appendChild(label);
    }

    const times = document.getElementById('times');
    const labels = ['15:30', '16:00', '16:30', '', '18:30', '19:00', '19:30', '20:00', '20:30', '21:00', '21:30', '22:00', '22:30', '23:00', '23:30', '19'];
    labels.forEach((text, i) => {
        const tick = document.createElement('span');
        tick.className = 'tick';
        tick.style.left = Math.round(97 + i * 53.5) + 'px';
        tick.textContent = text;
        times.appendChild(tick);
    });
}

drawChart();
fillAxes();
```
